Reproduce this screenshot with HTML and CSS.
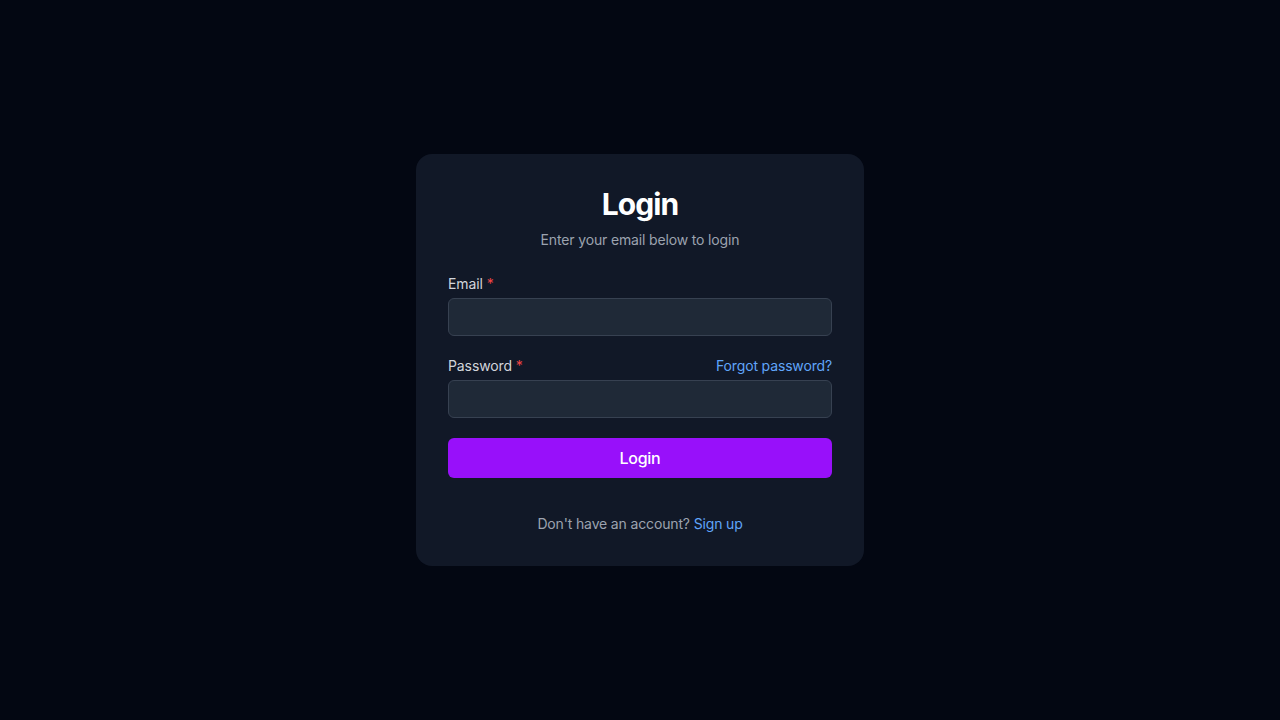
FILE: index.html
```html
<!DOCTYPE html>
<html lang="en">
<head>
<meta charset="utf-8">
<title>Login</title>
<link rel="stylesheet" href="styles.css">
</head>
<body>
<main class="page">
  <section class="card">
    <header class="card-header">
      <h1 class="title">Login</h1>
      <p class="subtitle">Enter your email below to login</p>
    </header>
    <form class="form">
      <div class="field">
        <label class="label" for="email">Email <span class="req">*</span></label>
        <input class="input" id="email" type="email">
      </div>
      <div class="field">
        <div class="label-row">
          <label class="label" for="password">Password <span class="req">*</span></label>
          <a class="link" href="#">Forgot password?</a>
        </div>
        <input class="input" id="password" type="password">
      </div>
      <button class="button" type="button">Login</button>
    </form>
    <p class="footer">Don't have an account? <a class="link" href="#">Sign up</a></p>
  </section>
</main>
</body>
</html>
```
FILE: styles.css
```css
* { box-sizing: border-box; }
html, body { margin: 0; padding: 0; }
body {
  background: #030712;
  font-family: Inter, "Noto Sans", sans-serif;
  color: #f9fafb;
}
.page {
  height: 720px;
  display: flex;
  align-items: center;
  justify-content: center;
}
.card {
  width: 448px;
  background: #111827;
  border-radius: 16px;
  padding: 32px;
  display: flex;
  flex-direction: column;
}
.card-header {
  text-align: center;
  display: flex;
  flex-direction: column;
  gap: 8px;
}
.title {
  margin: 0;
  font-size: 30px;
  line-height: 36px;
  font-weight: 700;
  color: #ffffff;
  letter-spacing: -0.9px;
}
.subtitle {
  margin: 0;
  font-size: 14px;
  line-height: 20px;
  color: #9ca3af;
  letter-spacing: -0.15px;
}
.form {
  margin-top: 24px;
  display: flex;
  flex-direction: column;
  gap: 20px;
}
.field {
  display: flex;
  flex-direction: column;
  gap: 4px;
}
.label-row {
  display: flex;
  justify-content: space-between;
  align-items: center;
}
.label {
  font-size: 14px;
  line-height: 20px;
  font-weight: 400;
  color: #d1d5db;
  letter-spacing: -0.1px;
}
.req { color: #ef4444; }
.link {
  font-size: 14px;
  line-height: 20px;
  color: #60a5fa;
  text-decoration: none;
  font-weight: 400;
  letter-spacing: -0.15px;
}
.input {
  height: 38px;
  width: 100%;
  background: #1f2937;
  border: 1px solid #374151;
  border-radius: 6px;
  color: #f9fafb;
  font: inherit;
  padding: 0 12px;
  outline: none;
}
.button {
  height: 40px;
  width: 100%;
  border: none;
  border-radius: 6px;
  background: #9810fa;
  color: #ffffff;
  font-family: inherit;
  font-size: 16px;
  font-weight: 500;
  letter-spacing: -0.3px;
  cursor: pointer;
}
.footer {
  margin: 36px 0 0;
  text-align: center;
  font-size: 14px;
  line-height: 20px;
  color: #9ca3af;
  letter-spacing: -0.15px;
}
```
